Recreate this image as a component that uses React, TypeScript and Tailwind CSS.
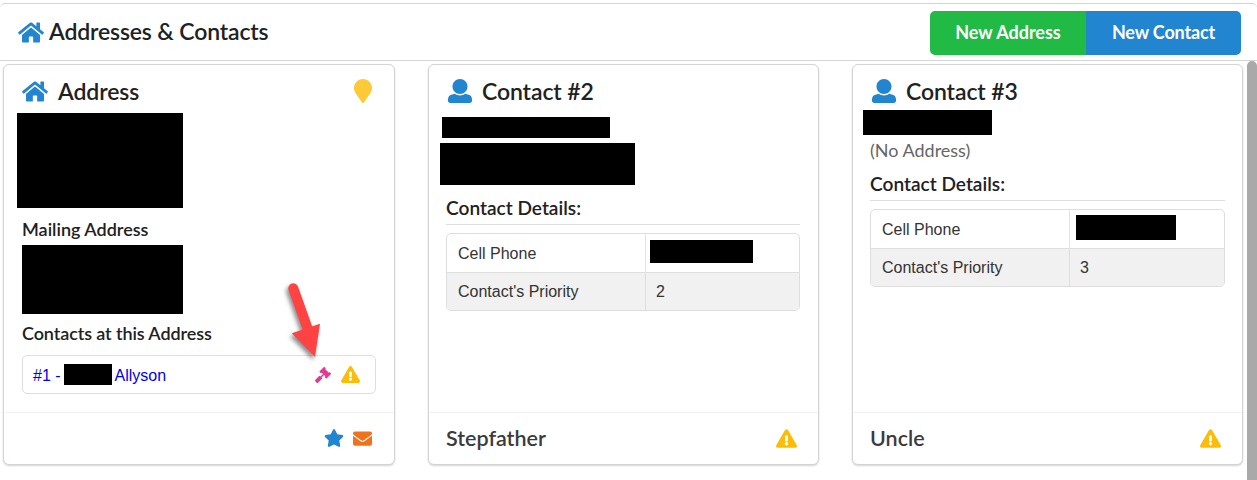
import { ReactNode } from "react";
import { FaEnvelope, FaExclamationTriangle, FaGavel, FaMapMarker, FaStar } from "react-icons/fa";
import { clsx } from "clsx";

const HomeIcon = ({ className }: { className?: string }) => (
  <svg viewBox="0 0 576 512" fill="currentColor" className={className}>
    <path d="M488 312.7V456c0 13.3-10.7 24-24 24H348c-6.6 0-12-5.4-12-12V356c0-6.6-5.4-12-12-12h-72c-6.6 0-12 5.4-12 12v112c0 6.6-5.4 12-12 12H112c-13.3 0-24-10.7-24-24V312.7c0-3.6 1.6-7 4.4-9.3l188-154.8c4.4-3.6 10.8-3.6 15.3 0l188 154.8c2.7 2.3 4.3 5.7 4.3 9.3zm83.6-60.9L488 182.9V44.4c0-6.6-5.4-12-12-12h-56c-6.6 0-12 5.4-12 12V117l-89.5-73.7c-17.7-14.6-43.3-14.6-61 0L4.4 251.8c-5.1 4.2-5.8 11.8-1.6 16.9l25.5 31c4.2 5.1 11.8 5.8 16.9 1.6l235.2-193.7c4.4-3.6 10.8-3.6 15.3 0l235.2 193.7c5.1 4.2 12.7 3.5 16.9-1.6l25.5-31c4.2-5.2 3.4-12.7-1.7-16.9z" />
  </svg>
);

const UserIcon = ({ className }: { className?: string }) => (
  <svg viewBox="0 0 512 512" fill="currentColor" className={className}>
    <path d="M256 0c88.366 0 160 71.634 160 160s-71.634 160-160 160S96 248.366 96 160 167.634 0 256 0zm183.283 333.821l-71.313-17.828c-74.923 53.89-165.738 41.864-223.94 0l-71.313 17.828C29.981 344.505 0 382.903 0 426.955V464c0 26.51 21.49 48 48 48h416c26.51 0 48-21.49 48-48v-37.045c0-44.052-29.981-82.45-72.717-93.134z" />
  </svg>
);

// Blacked out personal data
const Redacted = ({ className }: { className?: string }) => (
  <div className={clsx("bg-black shrink-0", className)} />
);

interface CardProps {
  icon: ReactNode;
  title: string;
  corner?: ReactNode;
  footer: ReactNode;
  children: ReactNode;
  className?: string;
}

const Card = ({ icon, title, corner, footer, children, className }: CardProps) => (
  <section
    className={clsx(
      "flex h-[401px] flex-col rounded-[6px] border border-[#d4d4d5] bg-white shadow-[0_1px_2px_0_#d4d4d5]",
      className
    )}
  >
    <div className="flex flex-1 flex-col px-[17px]">
      <div className="flex h-[45px] shrink-0 items-center pt-[7px]">
        {icon}
        <h3 className="text-[23px] leading-7 font-semibold tracking-[-0.1px]">{title}</h3>
        {corner}
      </div>
      {children}
    </div>
    <div className="flex h-[52px] items-center border-t border-[#f0f0f0] px-[17px] pb-px">{footer}</div>
  </section>
);

interface DetailsProps {
  priority: number;
  redacted: string;
  className?: string;
}

const ContactDetails = ({ priority, redacted, className }: DetailsProps) => (
  <div className={className}>
    <h4 className="h-[29px] border-b border-[#dededf] text-[19.1px] leading-6 font-semibold">Contact Details:</h4>
    <div className="mt-2 h-[78px] overflow-hidden rounded-[5px] border border-[#dededf] font-['Liberation_Sans',sans-serif] text-base text-[#333]">
      <div className="flex h-[38px]">
        <div className="flex w-[199px] items-center border-r border-[#e4e4e5] pt-px pl-[11px]">Cell Phone</div>
        <div className="flex-1">
          <Redacted className={redacted} />
        </div>
      </div>
      <div className="flex h-[38px] border-t border-[#dededf] bg-[#f1f1f1]">
        <div className="flex w-[199px] items-center border-r border-[#dededf] pl-[11px]">Contact's Priority</div>
        <div className="flex flex-1 items-center pl-[10px]">{priority}</div>
      </div>
    </div>
  </div>
);

const ContactFooter = ({ relation }: { relation: string }) => (
  <>
    <span className="text-[21.5px] leading-7 font-semibold text-[#3b3b3b]">{relation}</span>
    <FaExclamationTriangle className="mr-1 ml-auto h-[19px] w-[21px] text-[#fbbd08]" />
  </>
);

const App = () => {
  return (
    <div className="h-[480px] w-[1257px] overflow-hidden bg-white pt-[3px] font-[Lato,sans-serif] text-[#212121]">
      <header className="flex h-[58px] items-center rounded-t-[5px] border-y border-[#d4d4d5] pr-4 pl-[18px]">
        <HomeIcon className="h-[23px] w-[26px] text-[#2185d0]" />
        <h2 className="ml-[5px] pb-0.5 text-[23px] leading-7 font-semibold tracking-[-0.15px]">
          Addresses &amp; Contacts
        </h2>
        <div className="mt-0.5 ml-auto flex text-[18px] font-bold text-white">
          <button className="h-11 w-[156px] rounded-l-[5px] bg-[#21ba45] pb-0.5">New Address</button>
          <button className="h-11 w-[155px] rounded-r-[5px] bg-[#2185d0] pb-0.5 tracking-[-0.15px]">New Contact</button>
        </div>
      </header>

      <div className="flex h-[419px]">
        <main className="flex flex-1 gap-[33px] pt-[3px] pl-[3px]">
          <Card
            className="w-[392px] pl-px"
            icon={<HomeIcon className="mr-[10px] h-[23px] w-[26px] text-[#2185d0]" />}
            title="Address"
            corner={<FaMapMarker className="mr-[5px] ml-auto h-6 w-[18px] text-[#fcc938]" />}
            footer={
              <div className="mr-[5px] ml-auto flex items-center gap-[9px]">
                <FaStar className="size-5 text-[#2185d0]" />
                <FaEnvelope className="size-[19px] text-[#f2711c]" />
              </div>
            }
          >
            <Redacted className="mt-[3px] -ml-[5px] h-[95px] w-[166px]" />
            <h4 className="mt-[9px] text-[18px] leading-6 font-semibold">Mailing Address</h4>
            <Redacted className="mt-1 h-[69px] w-[161px]" />
            <h4 className="mt-[7px] text-[18px] leading-6 font-semibold tracking-[-0.1px]">Contacts at this Address</h4>
            <div className="relative mt-[10px] flex h-[39px] w-[354px] items-center rounded-[5px] border border-[#dededf] pl-[10px] font-['Liberation_Sans',sans-serif] text-base text-[#0000ee]">
              <span className="pt-0.5">#1 -</span>
              <Redacted className="ml-[3px] h-[21px] w-12" />
              <span className="ml-[3px] pt-0.5">Allyson</span>
              <FaGavel className="mr-[10px] ml-auto size-4 text-[#e03997]" />
              <FaExclamationTriangle className="mr-[15px] h-[17px] w-[19px] text-[#fbbd08]" />
              {/* Arrow pointing at the gavel */}
              <svg viewBox="0 0 50 90" className="absolute -top-[80px] left-[255px] h-[90px] w-[50px] drop-shadow-[-2px_3px_2px_rgba(0,0,0,0.45)]">
                <path d="M15.3 12.3 30.5 55" stroke="#ff4343" strokeWidth="10" strokeLinecap="round" />
                <path d="M13.8 57.2 42 47.8 37 81Z" fill="#ff4343" />
              </svg>
            </div>
          </Card>

          <Card
            className="w-[391px]"
            icon={<UserIcon className="mr-[10px] ml-[2px] size-6 text-[#2185d0]" />}
            title="Contact #2"
            footer={<ContactFooter relation="Stepfather" />}
          >
            <Redacted className="mt-[7px] -ml-1 h-[21px] w-[168px]" />
            <Redacted className="mt-[5px] -ml-[6px] h-[42px] w-[195px]" />
            <ContactDetails
              className="mt-[11px] w-[354px]"
              priority={2}
              redacted="mt-[6px] ml-[4px] h-[23px] w-[103px]"
            />
          </Card>

          <Card
            className="w-[391px]"
            icon={<UserIcon className="mr-[10px] ml-[2px] size-6 text-[#2185d0]" />}
            title="Contact #3"
            footer={<ContactFooter relation="Uncle" />}
          >
            <Redacted className="-ml-[7px] h-[25px] w-[129px]" />
            <p className="mt-[3px] text-[18px] leading-6 text-[#666]">(No Address)</p>
            <ContactDetails className="mt-[10px]" priority={3} redacted="mt-[5px] ml-[6px] h-[25px] w-[100px]" />
          </Card>
        </main>
        <div className="w-[10px] rounded-t-[5px] bg-[#a9a9a9]" />
      </div>
    </div>
  );
};

export default App;
